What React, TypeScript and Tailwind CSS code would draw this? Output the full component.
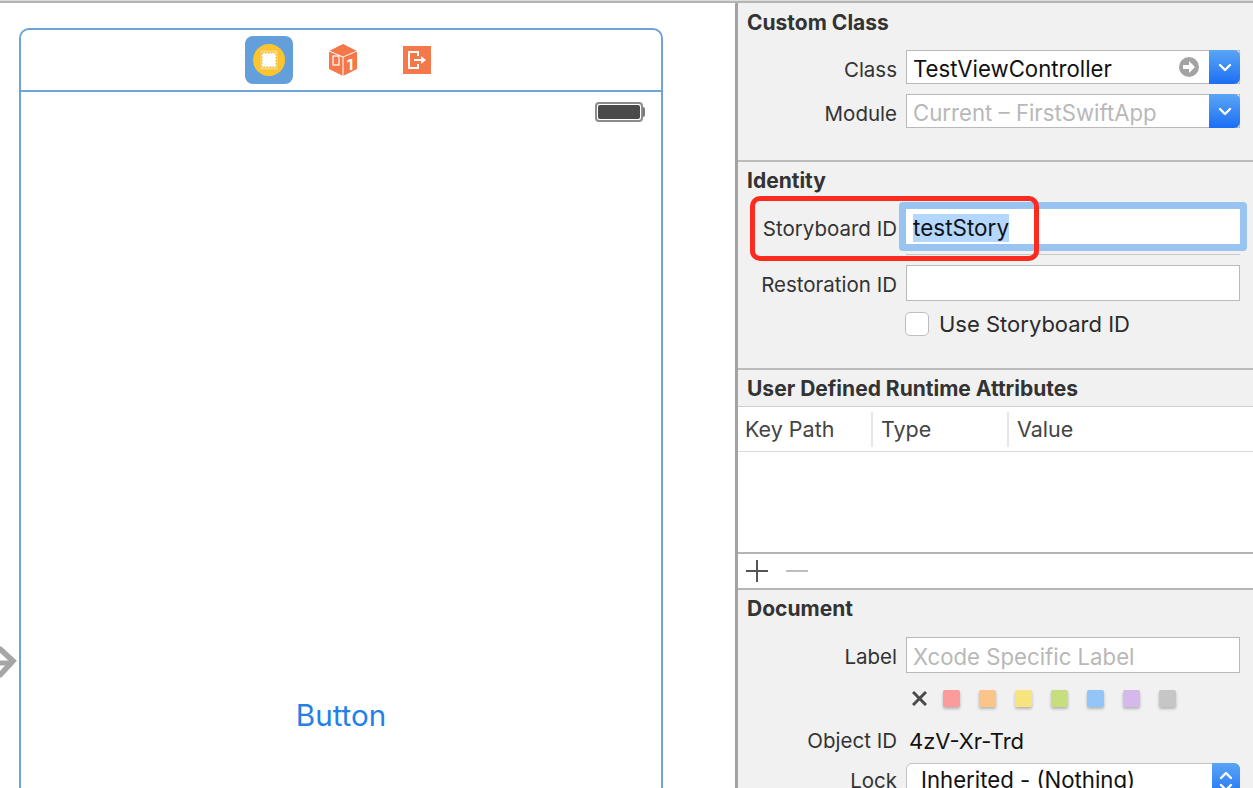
import React from 'react';

const Section = ({ title, className = "", children }: { title: string; className?: string; children?: React.ReactNode }) => (
  <div className={className}>
    <h2 className="pl-[9px] h-[28px] leading-[30px] text-[21px] font-bold text-[#333] whitespace-nowrap">{title}</h2>
    {children}
  </div>
);

const Row = ({ label, className = "", labelClass = "pt-[5px]", children }: { label: string; className?: string; labelClass?: string; children?: React.ReactNode }) => (
  <div className={`flex items-center ${className}`}>
    <div className={`w-[159px] shrink-0 text-right text-[20.5px] leading-[28px] text-[#333] whitespace-nowrap ${labelClass}`}>{label}</div>
    <div className="ml-[9px] w-[334px] shrink-0">{children}</div>
  </div>
);

const Field = ({ text, muted, height = "h-[36px]", children }: { text?: string; muted?: boolean; height?: string; children?: React.ReactNode }) => (
  <div className={`relative flex items-center ${height} bg-white border border-[#b9b9b9] pl-[6px] pt-[3px] text-[22.2px] leading-[28px] ${muted ? "text-[#b8b8b8]" : "text-[#111]"}`}>
    <span className="whitespace-nowrap">{text}</span>
    {children}
  </div>
);

const Chevron = () => (
  <svg width="14" height="9" viewBox="0 0 14 9" fill="none" stroke="white" strokeWidth="2.4" strokeLinecap="round" strokeLinejoin="round">
    <polyline points="2,2 7,7 12,2" />
  </svg>
);

const ComboButton = () => (
  <div className="absolute -top-px -bottom-px -right-px w-[31px] rounded-r-[6px] bg-gradient-to-b from-[#5aa5f6] to-[#1b6ef3] flex items-center justify-center">
    <Chevron />
  </div>
);

const swatches = ["bg-[#fb9b9b]", "bg-[#fbc58a]", "bg-[#f6e57e]", "bg-[#c6de7c]", "bg-[#93c5fb]", "bg-[#d6b9ec]", "bg-[#c6c6c6]"];

export default function App() {
  return (
    <div className="relative w-[1253px] h-[788px] overflow-hidden bg-white font-['Inter',sans-serif]">
      <div className="h-[3px] border-t border-t-[#dcdcdc] bg-[#b4b4b4]" />
      <div className="flex h-[785px]">
        {/* canvas */}
        <div className="relative w-[735px] shrink-0 bg-white pl-[19px] pt-[25px]">
          <svg className="absolute left-0 top-[642px]" width="17" height="36" viewBox="0 0 17 36" fill="none" stroke="#a6a6a6" strokeWidth="5">
            <polyline points="-2,18 13,18" />
            <polyline points="-1,3 13,16 -1,31" strokeWidth="5.5" />
          </svg>

          <div className="w-[644px] h-[800px] border-2 border-[#6fa3d8] rounded-t-[10px]">
            <div className="h-[62px] border-b-2 border-[#6fa3d8] flex items-center pl-[224px]">
              <div className="w-[48px] h-[48px] rounded-[8px] bg-[#639fdb] flex items-center justify-center">
                <svg width="32" height="32" viewBox="0 0 32 32">
                  <circle cx="16" cy="16" r="16" fill="#fdc52c" />
                  <rect x="7" y="6" width="18" height="20" fill="#fbd876" stroke="#eeb53a" strokeWidth="0.5" />
                  <rect x="9" y="9" width="14" height="14" fill="white" stroke="#e9ac2c" strokeWidth="1" strokeDasharray="1.5 1.5" />
                </svg>
              </div>
              <svg className="ml-[36px]" width="28" height="32" viewBox="0 0 28 32">
                <polygon points="14,0 28,7 28,25 14,32 0,25 0,7" fill="#f4784a" />
                <polyline points="0,7 14,13 28,7" fill="none" stroke="white" strokeWidth="1" />
                <line x1="14" y1="13" x2="14" y2="32" stroke="white" strokeWidth="1" />
                <rect x="4" y="12" width="6" height="9" fill="none" stroke="white" strokeWidth="1.2" />
                <text x="21" y="26" textAnchor="middle" fontSize="15" fontWeight="700" fill="white">1</text>
              </svg>
              <div className="ml-[46px] w-[28px] h-[28px] bg-[#f4784a] flex items-center justify-center">
                <svg width="22" height="22" viewBox="0 0 22 22" fill="none" stroke="white" strokeWidth="2">
                  <polyline points="12,7 12,3 3,3 3,19 12,19 12,15" />
                  <line x1="8" y1="11" x2="15" y2="11" />
                  <polygon points="15,7 20,11 15,15" fill="white" stroke="none" />
                </svg>
              </div>
            </div>
            <div className="flex justify-end pr-[16px] pt-[10px]">
              <div className="flex items-center">
                <div className="w-[48px] h-[20px] rounded-[4px] border-2 border-[#8b8b8b] p-[1px]">
                  <div className="w-full h-full rounded-[2px] bg-[#4a4a4a]" />
                </div>
                <div className="w-[2px] h-[10px] rounded-r bg-[#7a7a7a]" />
              </div>
            </div>
            <div className="mt-[575px] text-center text-[29.6px] leading-[36px] text-[#2280e6]">Button</div>
          </div>
        </div>

        {/* inspector */}
        <div className="flex-1 min-w-0 border-l-[3px] border-[#a3a3a3] bg-[#f1f1f1]">
          <Section title="Custom Class" className="pt-[5px] h-[159px] border-b-2 border-[#bcbcbc]">
            <Row label="Class" className="mt-[14px]">
              <Field text="TestViewController" height="h-[34px]">
                <div className="absolute right-[40px] top-[6px] w-[20px] h-[20px] rounded-full bg-[#a3a3a3] flex items-center justify-center">
                  <svg width="14" height="14" viewBox="0 0 14 14" fill="white">
                    <polygon points="1,5 7,5 7,1 13,7 7,13 7,9 1,9" />
                  </svg>
                </div>
                <ComboButton />
              </Field>
            </Row>
            <Row label="Module" className="mt-[10px]">
              <Field text="Current – FirstSwiftApp" muted height="h-[34px]">
                <ComboButton />
              </Field>
            </Row>
          </Section>

          <Section title="Identity" className="relative pt-[4px] h-[208px] border-b-2 border-[#bcbcbc]">
            <Row label="Storyboard ID" className="mt-[15px]" labelClass="pt-[4px]">
              <div className="relative">
                <div className="absolute -inset-x-[7px] -top-[7px] -bottom-[7px] rounded-[4px] bg-[#99c4f2]" />
                <div className="relative flex items-center h-[35px] bg-white pl-[7px] pt-[3px] text-[22.5px] text-[#111]">
                  <span className="bg-[#b3d7ff] h-[28px] leading-[28px] whitespace-nowrap">testStory</span>
                </div>
                <div className="absolute left-0 right-0 top-[45px] h-[1px] bg-[#c8c8c8]" />
              </div>
            </Row>
            <Row label="Restoration ID" className="mt-[21px]" labelClass="pt-[4px]">
              <Field />
            </Row>
            <div className="flex items-center mt-[11px] pl-[167px]">
              <div className="w-[24px] h-[24px] rounded-[5px] bg-white border border-[#bdbdbd]" />
              <span className="ml-[10px] text-[22px] leading-[24px] text-[#2b2b2b] whitespace-nowrap">Use Storyboard ID</span>
            </div>
            {/* red annotation */}
            <div className="absolute left-[12px] top-[34px] w-[289px] h-[65px] rounded-[10px] border-[5px] border-[#fb2c1f]" />
          </Section>

          <Section title="User Defined Runtime Attributes" className="pt-[4px]">
            <div className="mt-[4px] h-[146px] bg-white border-t border-[#cfcfcf]">
              <div className="h-[45px] border-b border-[#d9d9d9] flex items-center text-[21.5px] text-[#444]">
                <div className="w-[135px] pl-[7px] h-[35px] leading-[34px] border-r-2 border-[#e6e6e6] whitespace-nowrap">Key Path</div>
                <div className="w-[136px] pl-[8px] h-[35px] leading-[34px] border-r-2 border-[#e6e6e6]">Type</div>
                <div className="pl-[8px] h-[35px] leading-[34px]">Value</div>
              </div>
            </div>
            <div className="h-[38px] bg-white border-y-2 border-[#b4b4b4] flex items-center pl-[8px]">
              <svg width="64" height="22" viewBox="0 0 64 22" stroke="#555" strokeWidth="2">
                <line x1="0" y1="11" x2="22" y2="11" />
                <line x1="11" y1="0" x2="11" y2="22" />
                <line x1="40" y1="11" x2="62" y2="11" stroke="#bdbdbd" />
              </svg>
            </div>
          </Section>

          <Section title="Document" className="pt-[4px]">
            <Row label="Label" className="mt-[15px]" labelClass="pt-[3px]">
              <Field text="Xcode Specific Label" muted />
            </Row>
            <div className="flex items-center mt-[15px] pl-[174px] h-[20px]">
              <svg width="15" height="15" viewBox="0 0 15 15" stroke="#4a4a4a" strokeWidth="3">
                <line x1="1" y1="1" x2="14" y2="14" />
                <line x1="14" y1="1" x2="1" y2="14" />
              </svg>
              <div className="ml-[16px] flex gap-[19px]">
                {swatches.map((c) => (
                  <div key={c} className={`w-[17px] h-[17px] rounded-[2px] shadow-[0_2px_3px_rgba(0,0,0,0.25)] ${c}`} />
                ))}
              </div>
            </div>
            <Row label="Object ID" className="mt-[14px]">
              <div className="pt-[4px] pl-[3px] text-[22px] leading-[28px] text-[#111] whitespace-nowrap">4zV-Xr-Trd</div>
            </Row>
            <Row label="Lock" className="mt-[8px]" labelClass="">
              <div className="relative h-[36px] rounded-[6px] bg-white border border-[#c4c4c4] pl-[14px] text-[22.2px] leading-[32px] text-[#111] whitespace-nowrap">
                Inherited - (Nothing)
                <div className="absolute -top-px -bottom-px -right-px w-[28px] rounded-r-[6px] bg-gradient-to-b from-[#5aa5f6] to-[#1b6ef3] flex flex-col items-center justify-center gap-[3px]">
                  <span className="rotate-180 flex"><Chevron /></span>
                  <Chevron />
                </div>
              </div>
            </Row>
          </Section>
        </div>
      </div>
    </div>
  );
}
